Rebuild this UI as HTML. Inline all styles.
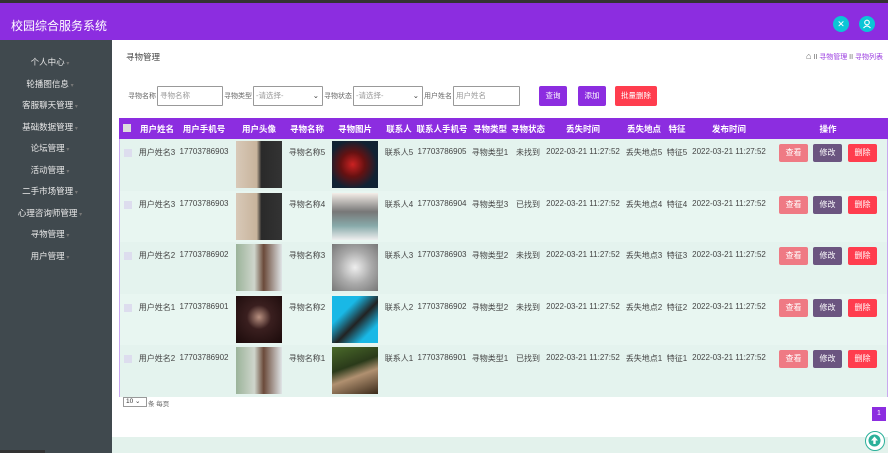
<!DOCTYPE html>
<html><head><meta charset="utf-8"><style>
*{margin:0;padding:0;box-sizing:border-box}
body{width:888px;height:453px;overflow:hidden;position:relative;background:#fff;font-family:"Liberation Sans","Noto Sans CJK SC",sans-serif;font-size:8px;color:#444}
.a{position:absolute;white-space:nowrap}
.c{position:absolute;white-space:nowrap;transform:translateX(-50%)}
#top{left:0;top:0;width:888px;height:3px;background:#333}
#hd{left:0;top:3px;width:888px;height:37px;background:#8c2de0}
#sb{left:0;top:40px;width:112px;height:413px;background:#40494e}
.sbi{color:#e8e8e8;font-size:8.5px}
.sbi:after{content:" ▾";color:#777;font-size:6px}
.row{position:absolute;left:120px;width:767px;height:51.5px}
.row .c,.row .a{top:8px}
.img{position:absolute;top:2px;width:46px;height:47px}
.btn{position:absolute;top:5px;height:18px;width:29px;border-radius:2px;color:#fff;font-size:8px;text-align:center;line-height:18px}
.th{color:#fff;font-weight:bold;font-size:8.5px;top:123px}
.lab{font-size:7px;color:#666;top:91px}
.inp{position:absolute;top:86px;height:20px;border:1px solid #999;background:#fff;color:#999;font-size:7.5px;line-height:18px;padding-left:2px;border-radius:1px}
.sbtn{position:absolute;top:86px;height:20px;border-radius:2px;color:#fff;font-size:7.5px;text-align:center;line-height:20px}
</style></head><body>
<div class="a" id="top"></div>
<div class="a" id="hd"></div>
<div class="a" style="left:11px;top:17px;color:#fff;font-size:12px">校园综合服务系统</div>
<div class="a" style="left:833px;top:16px;width:16px;height:16px;border-radius:50%;background:#0bc5d6;color:#fff;font-size:9px;text-align:center;line-height:16px">✕</div>
<div class="a" style="left:859px;top:16px;width:16px;height:16px;border-radius:50%;background:#0bc5d6"><svg width="16" height="16"><circle cx="8" cy="6.5" r="2.3" fill="none" stroke="#fff" stroke-width="1.1"/><path d="M4.5 12 Q8 8 11.5 12" fill="none" stroke="#fff" stroke-width="1.1"/></svg></div>
<div class="a" id="sb"></div>
<div class="c sbi" style="left:50px;top:56px">个人中心</div>
<div class="c sbi" style="left:50px;top:78px">轮播图信息</div>
<div class="c sbi" style="left:50px;top:99px">客服聊天管理</div>
<div class="c sbi" style="left:50px;top:121px">基础数据管理</div>
<div class="c sbi" style="left:50px;top:142px">论坛管理</div>
<div class="c sbi" style="left:50px;top:164px">活动管理</div>
<div class="c sbi" style="left:50px;top:185px">二手市场管理</div>
<div class="c sbi" style="left:50px;top:207px">心理咨询师管理</div>
<div class="c sbi" style="left:50px;top:228px">寻物管理</div>
<div class="c sbi" style="left:50px;top:250px">用户管理</div>

<div class="a" style="left:126px;top:51px;font-size:8.5px;color:#444">寻物管理</div>
<div class="a" style="left:806px;top:51px;font-size:7px;color:#9a3be0"><span style="color:#666;font-size:9px">⌂</span> <span style="color:#666">II</span> 寻物管理 <span style="color:#666">II</span> 寻物列表</div>

<div class="a lab" style="left:128px">寻物名称</div>
<div class="inp" style="left:157px;width:66px">寻物名称</div>
<div class="a lab" style="left:224px">寻物类型</div>
<div class="inp" style="left:253px;width:70px">-请选择- <span style="float:right;padding-right:3px;color:#333">⌄</span></div>
<div class="a lab" style="left:324px">寻物状态</div>
<div class="inp" style="left:353px;width:70px">-请选择- <span style="float:right;padding-right:3px;color:#333">⌄</span></div>
<div class="a lab" style="left:424px">用户姓名</div>
<div class="inp" style="left:453px;width:67px">用户姓名</div>
<div class="sbtn" style="left:539px;width:28px;background:#8c2de0">查询</div>
<div class="sbtn" style="left:578px;width:28px;background:#8c2de0">添加</div>
<div class="sbtn" style="left:615px;width:42px;background:#ff3d4e">批量删除</div>

<div class="a" style="left:119px;top:118px;width:769px;height:279px;border:1px solid #c9a8ef;background:#e6f4ef"></div>
<div class="a" style="left:119px;top:118px;width:769px;height:21px;background:#8c2de0"></div>
<div class="a" style="left:123px;top:124px;width:8px;height:8px;background:#ddd"></div>
<div class="c th" style="left:157px">用户姓名</div>
<div class="c th" style="left:204px">用户手机号</div>
<div class="c th" style="left:259px">用户头像</div>
<div class="c th" style="left:307px">寻物名称</div>
<div class="c th" style="left:355px">寻物图片</div>
<div class="c th" style="left:399px">联系人</div>
<div class="c th" style="left:442px">联系人手机号</div>
<div class="c th" style="left:490px">寻物类型</div>
<div class="c th" style="left:528px">寻物状态</div>
<div class="c th" style="left:583px">丢失时间</div>
<div class="c th" style="left:644px">丢失地点</div>
<div class="c th" style="left:677px">特征</div>
<div class="c th" style="left:729px">发布时间</div>
<div class="c th" style="left:828px">操作</div>

<div class="row" style="top:139px;background:#e4f3ee">
<div class="a" style="left:4px;top:10px;width:8px;height:8px;background:#dde"></div>
<div class="c" style="left:37px">用户姓名3</div><div class="c" style="left:84px">17703786903</div>
<div class="img" style="left:116px;background:linear-gradient(90deg,#d8c9b8 0,#c8b49c 45%,#2a2a2a 55%,#333 100%)"></div>
<div class="c" style="left:187px">寻物名称5</div>
<div class="img" style="left:212px;background:radial-gradient(circle at 45% 50%,#c22 0,#611 35%,#123 70%)"></div>
<div class="c" style="left:279px">联系人5</div><div class="c" style="left:322px">17703786905</div><div class="c" style="left:370px">寻物类型1</div><div class="c" style="left:408px">未找到</div><div class="c" style="left:463px">2022-03-21 11:27:52</div><div class="c" style="left:524px">丢失地点5</div><div class="c" style="left:557px">特征5</div><div class="c" style="left:609px">2022-03-21 11:27:52</div>
<div class="btn" style="left:659px;background:#ef7a84">查看</div><div class="btn" style="left:693px;background:#6b5580">修改</div><div class="btn" style="left:728px;background:#ff3d4e">删除</div>
</div>
<div class="row" style="top:190.5px;background:#e8f6f1">
<div class="a" style="left:4px;top:10px;width:8px;height:8px;background:#dde"></div>
<div class="c" style="left:37px">用户姓名3</div><div class="c" style="left:84px">17703786903</div>
<div class="img" style="left:116px;background:linear-gradient(90deg,#d8c9b8 0,#c8b49c 45%,#2a2a2a 55%,#333 100%)"></div>
<div class="c" style="left:187px">寻物名称4</div>
<div class="img" style="left:212px;background:linear-gradient(180deg,#f4eee8 0,#777 40%,#8aa 70%,#eee 100%)"></div>
<div class="c" style="left:279px">联系人4</div><div class="c" style="left:322px">17703786904</div><div class="c" style="left:370px">寻物类型3</div><div class="c" style="left:408px">已找到</div><div class="c" style="left:463px">2022-03-21 11:27:52</div><div class="c" style="left:524px">丢失地点4</div><div class="c" style="left:557px">特征4</div><div class="c" style="left:609px">2022-03-21 11:27:52</div>
<div class="btn" style="left:659px;background:#ef7a84">查看</div><div class="btn" style="left:693px;background:#6b5580">修改</div><div class="btn" style="left:728px;background:#ff3d4e">删除</div>
</div>
<div class="row" style="top:242px;background:#e4f3ee">
<div class="a" style="left:4px;top:10px;width:8px;height:8px;background:#dde"></div>
<div class="c" style="left:37px">用户姓名2</div><div class="c" style="left:84px">17703786902</div>
<div class="img" style="left:116px;background:linear-gradient(90deg,#9bb39a 0,#cfd6cc 40%,#6b4a3a 60%,#dfe4e6 100%)"></div>
<div class="c" style="left:187px">寻物名称3</div>
<div class="img" style="left:212px;background:radial-gradient(circle at 50% 50%,#eee 0,#aaa 50%,#777 100%)"></div>
<div class="c" style="left:279px">联系人3</div><div class="c" style="left:322px">17703786903</div><div class="c" style="left:370px">寻物类型2</div><div class="c" style="left:408px">未找到</div><div class="c" style="left:463px">2022-03-21 11:27:52</div><div class="c" style="left:524px">丢失地点3</div><div class="c" style="left:557px">特征3</div><div class="c" style="left:609px">2022-03-21 11:27:52</div>
<div class="btn" style="left:659px;background:#ef7a84">查看</div><div class="btn" style="left:693px;background:#6b5580">修改</div><div class="btn" style="left:728px;background:#ff3d4e">删除</div>
</div>
<div class="row" style="top:293.5px;background:#e8f6f1">
<div class="a" style="left:4px;top:10px;width:8px;height:8px;background:#dde"></div>
<div class="c" style="left:37px">用户姓名1</div><div class="c" style="left:84px">17703786901</div>
<div class="img" style="left:116px;background:radial-gradient(circle at 50% 45%,#b89080 0,#3a1f1f 35%,#1a0a0a 100%)"></div>
<div class="c" style="left:187px">寻物名称2</div>
<div class="img" style="left:212px;background:linear-gradient(135deg,#19b8e6 0,#19b8e6 30%,#222 55%,#19b8e6 80%)"></div>
<div class="c" style="left:279px">联系人2</div><div class="c" style="left:322px">17703786902</div><div class="c" style="left:370px">寻物类型2</div><div class="c" style="left:408px">未找到</div><div class="c" style="left:463px">2022-03-21 11:27:52</div><div class="c" style="left:524px">丢失地点2</div><div class="c" style="left:557px">特征2</div><div class="c" style="left:609px">2022-03-21 11:27:52</div>
<div class="btn" style="left:659px;background:#ef7a84">查看</div><div class="btn" style="left:693px;background:#6b5580">修改</div><div class="btn" style="left:728px;background:#ff3d4e">删除</div>
</div>
<div class="row" style="top:345px;background:#e4f3ee">
<div class="a" style="left:4px;top:10px;width:8px;height:8px;background:#dde"></div>
<div class="c" style="left:37px">用户姓名2</div><div class="c" style="left:84px">17703786902</div>
<div class="img" style="left:116px;background:linear-gradient(90deg,#9bb39a 0,#cfd6cc 40%,#6b4a3a 60%,#dfe4e6 100%)"></div>
<div class="c" style="left:187px">寻物名称1</div>
<div class="img" style="left:212px;background:linear-gradient(160deg,#4a6a2a 0,#2a3a1a 40%,#b09070 60%,#3a2a1a 100%)"></div>
<div class="c" style="left:279px">联系人1</div><div class="c" style="left:322px">17703786901</div><div class="c" style="left:370px">寻物类型1</div><div class="c" style="left:408px">已找到</div><div class="c" style="left:463px">2022-03-21 11:27:52</div><div class="c" style="left:524px">丢失地点1</div><div class="c" style="left:557px">特征1</div><div class="c" style="left:609px">2022-03-21 11:27:52</div>
<div class="btn" style="left:659px;background:#ef7a84">查看</div><div class="btn" style="left:693px;background:#6b5580">修改</div><div class="btn" style="left:728px;background:#ff3d4e">删除</div>
</div>

<div class="a" style="left:123px;top:397px;width:24px;height:10px;border:1px solid #999;font-size:6.5px;line-height:8px;padding-left:2px;color:#333">10 ⌄</div>
<div class="a" style="left:148px;top:398px;font-size:6.5px;color:#666">条 每页</div>
<div class="a" style="left:872px;top:407px;width:14px;height:14px;background:#8c2de0;color:#fff;font-size:7px;text-align:center;line-height:14px">1</div>
<div class="a" style="left:112px;top:437px;width:776px;height:16px;background:#e3f2ec"></div>
<div class="a" style="left:865px;top:431px;width:20px;height:20px;border-radius:50%;border:1.5px solid #2bb09a;background:#fff"><svg width="17" height="17"><circle cx="8.5" cy="8.5" r="6" fill="#2bb09a"/><path d="M8.5 4.5 L5 8.5 H7.3 V12 H9.7 V8.5 H12 Z" fill="#fff"/></svg></div>
<div class="a" style="left:0;top:450px;width:45px;height:3px;background:#333"></div>
</body></html>
